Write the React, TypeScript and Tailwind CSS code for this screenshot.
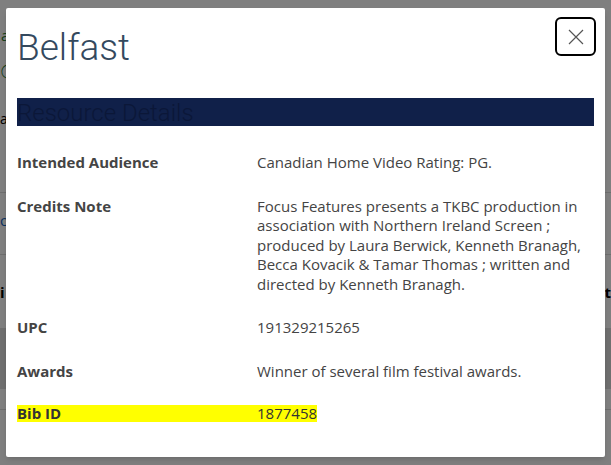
import React from 'react';

const ROWS = [
  { label: 'Intended Audience', value: 'Canadian Home Video Rating: PG.' },
  {
    label: 'Credits Note',
    value:
      'Focus Features presents a TKBC production in association with Northern Ireland Screen ; produced by Laura Berwick, Kenneth Branagh, Becca Kovacik & Tamar Thomas ; written and directed by Kenneth Branagh.',
  },
  { label: 'UPC', value: '191329215265' },
  { label: 'Awards', value: 'Winner of several film festival awards.' },
];

export default function App() {
  return (
    <div className="relative h-[465px] w-full overflow-hidden bg-white" style={{ fontFamily: '"Open Sans", "Noto Sans", sans-serif' }}>
      {/* Page behind the dialog, only its edges show */}
      <div className="flex flex-col text-[15px]">
        <div className="h-[24px]" />
        <div className="h-[36px] pl-[1px] text-[#2e7d32]">a</div>
        <div className="h-[40px] pl-[1px] text-[#2e7d32]">ⓘ</div>
        <div className="h-[60px] pt-[8px] text-[14px] text-black">at</div>
        <div className="h-[33px] border-b border-[#dcdcdc]" />
        <div className="h-[62px] border-b border-[#dcdcdc] pt-[16px] text-[#1565c0]">o</div>
        <div className="flex h-[73px] justify-between pt-[26px] font-bold text-black">
          <span>i</span>
          <span>ot</span>
        </div>
        <div className="h-[61px] bg-[#dedede]" />
        <div className="h-[21px] border-b border-[#dcdcdc]" />
      </div>

      {/* Backdrop */}
      <div className="absolute inset-0 bg-black/50" />

      {/* Dialog */}
      <div className="absolute left-[6px] top-[8px] h-[449px] w-[599px] overflow-hidden rounded-[2px] bg-white shadow-md">
        <div className="flex items-start justify-between pl-[11px] pr-[9px] pt-[9px]" style={{ fontFamily: 'Roboto, sans-serif' }}>
          <h1 className="text-[37px] font-light leading-[62px] text-[#34495e]">Belfast</h1>
          <button className="flex h-[39px] w-[41px] items-center justify-center rounded-[6px] border-2 border-black bg-white">
            <svg width="16" height="16" viewBox="0 0 16 16" fill="none" stroke="#555" strokeWidth="1.2">
              <path d="M1 1L15 15M15 1L1 15" />
            </svg>
          </button>
        </div>

        <div
          className="mx-[11px] mt-[19px] h-[28px] bg-[#102049] text-[24px] font-light leading-[30px] text-[#0b1738]"
          style={{ fontFamily: 'Roboto, sans-serif' }}
        >
          Resource Details
        </div>

        <dl className="flex flex-col gap-6 px-[11px] pt-[27px] text-[15px] leading-[19.5px] text-[#444]">
          {ROWS.map((row) => (
            <div key={row.label} className="flex">
              <dt className="w-[240px] shrink-0 font-bold">{row.label}</dt>
              <dd className="w-[330px]">{row.value}</dd>
            </div>
          ))}
          <div className="flex w-fit bg-[#ffff00] leading-[17px] text-[#333]">
            <dt className="w-[240px] shrink-0 font-bold">Bib ID</dt>
            <dd>1877458</dd>
          </div>
        </dl>
      </div>
    </div>
  );
}
